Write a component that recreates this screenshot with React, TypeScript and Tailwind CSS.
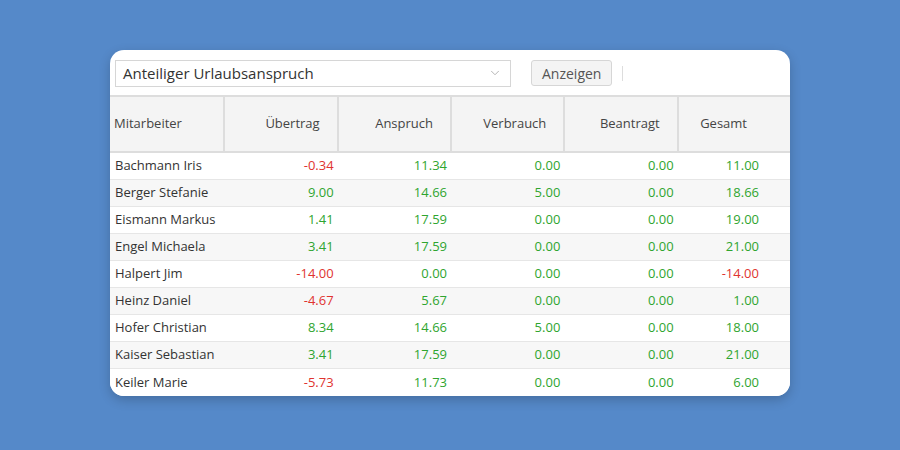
import {ChevronDown} from 'lucide-react'

const rows: [string, string, string, string, string, string][] = [
  ['Bachmann Iris', '-0.34', '11.34', '0.00', '0.00', '11.00'],
  ['Berger Stefanie', '9.00', '14.66', '5.00', '0.00', '18.66'],
  ['Eismann Markus', '1.41', '17.59', '0.00', '0.00', '19.00'],
  ['Engel Michaela', '3.41', '17.59', '0.00', '0.00', '21.00'],
  ['Halpert Jim', '-14.00', '0.00', '0.00', '0.00', '-14.00'],
  ['Heinz Daniel', '-4.67', '5.67', '0.00', '0.00', '1.00'],
  ['Hofer Christian', '8.34', '14.66', '5.00', '0.00', '18.00'],
  ['Kaiser Sebastian', '3.41', '17.59', '0.00', '0.00', '21.00'],
  ['Keiler Marie', '-5.73', '11.73', '0.00', '0.00', '6.00'],
]

const heads = ['Übertrag', 'Anspruch', 'Verbrauch', 'Beantragt']

export default function App() {
  return (
    <div
      className="flex h-[450px] w-[900px] items-start justify-center bg-[#5589c9] pt-[50px]"
      style={{fontFamily: '"Open Sans", sans-serif'}}
    >
      <div className="w-[680px] overflow-hidden rounded-[14px] bg-white shadow-[0_4px_12px_rgba(0,0,0,0.2)]">
        <div className="flex h-[45px] items-center px-[5px] pt-[1px]">
          <div className="flex h-[27px] w-[396px] items-center justify-between border border-[#d6d6d6] bg-white pl-[7px] pr-[8px] text-[15px] text-[#333]">
            Anteiliger Urlaubsanspruch
            <ChevronDown size={14} className="text-[#aaa]" strokeWidth={1.5} />
          </div>
          <button className="ml-[20px] h-[26px] rounded-[3px] border border-[#d6d6d6] bg-[#f4f4f4] px-[10px] text-[14px] text-[#555]">
            Anzeigen
          </button>
          <div className="ml-[10px] h-[15px] w-px bg-[#ddd]" />
        </div>
        <div className="border-t-2 border-[#ddd]">
          <div className="grid h-[56px] grid-cols-6 border-b-2 border-[#ddd] bg-[#f4f4f4] text-[13px] text-[#444]">
            <div className="flex items-center pl-[4px]">Mitarbeiter</div>
            {heads.map((h) => (
              <div key={h} className="flex items-center justify-end border-l-2 border-[#ddd] pr-[17px]">
                {h}
              </div>
            ))}
            <div className="flex items-center justify-end border-l-2 border-[#ddd] pr-[43px]">Gesamt</div>
          </div>
          {rows.map((r, i) => (
            <div
              key={r[0]}
              className={`grid h-[27px] grid-cols-6 items-center border-b border-[#e6e6e6] text-[13px] last:border-b-0 ${i % 2 ? 'bg-[#f7f7f7]' : 'bg-white'}`}
            >
              <div className="pl-[5px] text-[#333]">{r[0]}</div>
              {r.slice(1).map((v, j) => (
                <div
                  key={j}
                  className={`text-right ${j === 4 ? 'pr-[31px]' : 'pr-[3px]'} ${v.startsWith('-') ? 'text-[#e0342f]' : 'text-[#2fa52f]'}`}
                >
                  {v}
                </div>
              ))}
            </div>
          ))}
        </div>
      </div>
    </div>
  )
}
